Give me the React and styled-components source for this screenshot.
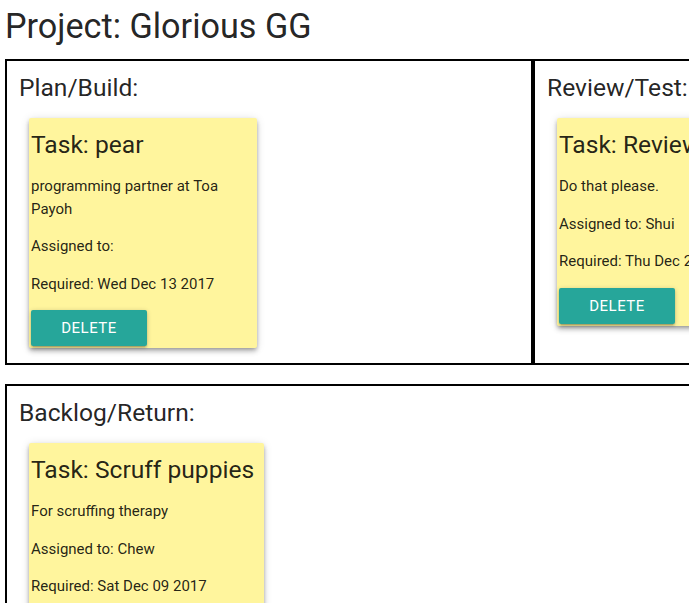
import React from "react";
import styled, { createGlobalStyle } from "styled-components";

const Global = createGlobalStyle`
  html, body { margin: 0; padding: 0; background: #fff; overflow: hidden; }
  body {
    font-family: Roboto, "Liberation Sans", sans-serif;
    font-size: 15px;
    line-height: 1.5;
    color: rgba(0,0,0,0.87);
  }
  * { box-sizing: border-box; }
`;

const Page = styled.div`
  padding: 0 5px;
  width: 1100px;
`;

const Title = styled.h1`
  font-size: 34.2px;
  font-weight: 400;
  line-height: 42px;
  margin: 5px 0 12px;
`;

const Row = styled.div`
  display: flex;
  margin-bottom: 19px;
`;

const Column = styled.section`
  flex: 0 0 ${(p) => p.$width}px;
  border: 2px solid #000;
  padding: 12px 12px 15px;
`;

const ColumnTitle = styled.h2`
  font-size: 24.6px;
  font-weight: 400;
  line-height: 30px;
  margin: 0 0 15px;
`;

const Cards = styled.div`
  display: flex;
  gap: 20px;
  padding-left: 10px;
`;

const Card = styled.div`
  width: ${(p) => p.$width}px;
  flex: 0 0 auto;
  background: #fff59d;
  border-radius: 2px;
  padding: 2px;
  box-shadow: 0 4px 5px 0 rgba(0,0,0,0.14), 0 1px 10px 0 rgba(0,0,0,0.12), 0 2px 4px -1px rgba(0,0,0,0.3);
`;

const CardTitle = styled.h3`
  font-size: 24.6px;
  font-weight: 400;
  line-height: 30px;
  margin: 10px 0 15px;
  white-space: nowrap;
`;

const Text = styled.p`
  margin: 0 0 15px;
  line-height: 22.5px;
`;

const DeleteButton = styled.button`
  display: block;
  width: 116px;
  height: 36px;
  border: none;
  border-radius: 2px;
  background: #26a69a;
  color: #fff;
  font-family: Roboto, "Liberation Sans", sans-serif;
  font-size: 15px;
  letter-spacing: 0.5px;
  text-transform: uppercase;
  box-shadow: 0 2px 2px 0 rgba(0,0,0,0.14), 0 3px 1px -2px rgba(0,0,0,0.12), 0 1px 5px 0 rgba(0,0,0,0.2);
  cursor: pointer;
`;

const TaskCard = ({ task }) => (
  <Card $width={task.width}>
    <CardTitle>Task: {task.name}</CardTitle>
    <Text>{task.description}</Text>
    <Text>Assigned to:{task.assignee ? ` ${task.assignee}` : ""}</Text>
    <Text>Required: {task.required}</Text>
    <DeleteButton>Delete</DeleteButton>
  </Card>
);

const plan = [
  { name: "pear", description: "programming partner at Toa Payoh", assignee: "", required: "Wed Dec 13 2017", width: 228 },
];
const review = [
  { name: "Review the code", description: "Do that please.", assignee: "Shui", required: "Thu Dec 21 2017", width: 228 },
];
const backlog = [
  { name: "Scruff puppies", description: "For scruffing therapy", assignee: "Chew", required: "Sat Dec 09 2017", width: 235 },
];

export default function App() {
  return (
    <Page>
      <Global />
      <Title>Project: Glorious GG</Title>
      <Row>
        <Column $width={528}>
          <ColumnTitle>Plan/Build:</ColumnTitle>
          <Cards>{plan.map((t) => <TaskCard key={t.name} task={t} />)}</Cards>
        </Column>
        <Column $width={528}>
          <ColumnTitle>Review/Test:</ColumnTitle>
          <Cards>{review.map((t) => <TaskCard key={t.name} task={t} />)}</Cards>
        </Column>
      </Row>
      <Row>
        <Column $width={1056}>
          <ColumnTitle>Backlog/Return:</ColumnTitle>
          <Cards>{backlog.map((t) => <TaskCard key={t.name} task={t} />)}</Cards>
        </Column>
      </Row>
    </Page>
  );
}
